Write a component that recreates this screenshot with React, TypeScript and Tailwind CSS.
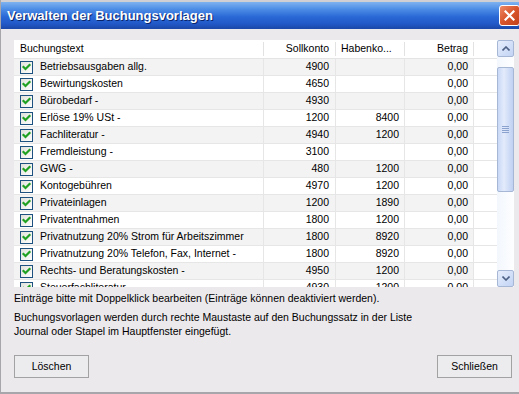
import React from "react";

const rows: [string, string, string, string][] = [
  ["Betriebsausgaben allg.", "4900", "", "0,00"],
  ["Bewirtungskosten", "4650", "", "0,00"],
  ["Bürobedarf -", "4930", "", "0,00"],
  ["Erlöse 19% USt -", "1200", "8400", "0,00"],
  ["Fachliteratur -", "4940", "1200", "0,00"],
  ["Fremdleistung -", "3100", "", "0,00"],
  ["GWG -", "480", "1200", "0,00"],
  ["Kontogebühren", "4970", "1200", "0,00"],
  ["Privateinlagen", "1200", "1890", "0,00"],
  ["Privatentnahmen", "1800", "1200", "0,00"],
  ["Privatnutzung 20% Strom für Arbeitszimmer", "1800", "8920", "0,00"],
  ["Privatnutzung 20% Telefon, Fax, Internet -", "1800", "8920", "0,00"],
  ["Rechts- und Beratungskosten -", "4950", "1200", "0,00"],
  ["Steuerfachliteratur -", "4930", "1200", "0,00"],
];

function Check() {
  return (
    <svg width="13" height="13" viewBox="0 0 13 13" className="shrink-0">
      <defs>
        <linearGradient id="cbg" x1="0" y1="0" x2="1" y2="1">
          <stop offset="0" stopColor="#e0e0da" />
          <stop offset="1" stopColor="#ffffff" />
        </linearGradient>
      </defs>
      <rect x="0.5" y="0.5" width="12" height="12" fill="url(#cbg)" stroke="#1c5180" />
      <path d="M3.5 6 L5.5 8 L9.5 4" stroke="#21a121" strokeWidth="2.2" fill="none" strokeLinecap="square" />
    </svg>
  );
}

export default function App() {
  const font = { fontFamily: '"Liberation Sans", Arial, sans-serif' };
  return (
    <div
      className="w-[519px] h-[394px] overflow-hidden flex flex-col bg-[#ece9ec] text-[10.5px] text-black border-l border-[#a7a6aa]"
      style={font}
    >
      {/* Title bar */}
      <div className="h-[2px] bg-[#cfcfd4] shrink-0" />
      <div className="h-[27px] shrink-0 flex items-center pl-[6px] bg-[linear-gradient(to_bottom,#7fb3f0_0%,#4f8fe6_25%,#2a68d6_55%,#2259c8_80%,#1b47a8_100%)]">
        <span className="flex-1 text-white font-bold text-[13px] pt-[1px] [text-shadow:1px_1px_0_#0a246a]">
          Verwalten der Buchungsvorlagen
        </span>
        <div className="w-[21px] h-[21px] mr-[-1px] rounded-[3px] border border-white bg-[linear-gradient(to_bottom_right,#ec8a66,#d9542a_50%,#c0401c)] flex items-center justify-center">
          <svg width="11" height="11" viewBox="0 0 11 11">
            <path d="M1.5 1.5 L9.5 9.5 M9.5 1.5 L1.5 9.5" stroke="#ffffff" strokeWidth="2.2" strokeLinecap="square" />
          </svg>
        </div>
      </div>

      {/* Body */}
      <div className="flex-1 flex flex-col pt-[11px] pl-[13px] pr-[5px] border-b-2 border-[#a7a6aa]">
        {/* List */}
        <div className="w-[500px] h-[247px] bg-white flex overflow-hidden">
          <div className="flex-1 flex flex-col overflow-hidden">
            {/* header */}
            <div className="h-[19px] shrink-0 grid grid-cols-[249px_72px_69px_69px_1fr] items-center border-b border-[#e4e4e4]">
              <div className="pl-[6px]">Buchungstext</div>
              <div className="border-l border-[#e2e2e2] h-[14px] flex items-center justify-end pr-[6px]">Sollkonto</div>
              <div className="border-l border-[#e2e2e2] h-[14px] flex items-center pl-[5px]">Habenko...</div>
              <div className="border-l border-[#e2e2e2] h-[14px] flex items-center justify-end pr-[5px]">Betrag</div>
              <div className="border-l border-[#e2e2e2] h-[14px]" />
            </div>
            {rows.map((r, i) => (
              <div
                key={i}
                className={`h-[17px] shrink-0 grid grid-cols-[249px_72px_69px_69px_1fr] border-b border-[#e6e6e6] ${
                  i % 2 === 0 ? "bg-[#f3f3f3]" : "bg-white"
                }`}
              >
                <div className="flex items-center pl-[6px] gap-[7px]">
                  <Check />
                  <span>{r[0]}</span>
                </div>
                <div className="border-l border-[#e6e6e6] flex items-center justify-end pr-[6px]">{r[1]}</div>
                <div className="border-l border-[#e6e6e6] flex items-center justify-end pr-[5px]">{r[2]}</div>
                <div className="border-l border-[#e6e6e6] flex items-center justify-end pr-[5px]">{r[3]}</div>
                <div className="border-l border-[#e6e6e6] bg-white" />
              </div>
            ))}
          </div>
          {/* scrollbar */}
          <div className="w-[17px] shrink-0 flex flex-col bg-[linear-gradient(to_right,#f3f7fd,#fdfeff)]">
            <div className="h-[17px] shrink-0 rounded-[2px] border border-[#a6b7d6] bg-[linear-gradient(to_bottom_right,#e6eefc,#c2d3f4)] flex items-center justify-center">
              <svg width="8" height="5" viewBox="0 0 8 5">
                <path d="M0.5 4.5 L4 1 L7.5 4.5" stroke="#4d6185" strokeWidth="1.6" fill="none" />
              </svg>
            </div>
            <div className="h-[10px] shrink-0" />
            <div className="h-[125px] shrink-0 rounded-[2px] border border-[#a6b7d6] bg-[linear-gradient(to_right,#c9d8f6,#e3ebfb_40%,#bfd0f2)] flex items-center justify-center">
              <svg width="7" height="8" viewBox="0 0 7 8">
                <path d="M0 0.5 H7 M0 2.5 H7 M0 4.5 H7 M0 6.5 H7" stroke="#8ca2ce" strokeWidth="1" />
              </svg>
            </div>
            <div className="flex-1" />
            <div className="h-[17px] shrink-0 rounded-[2px] border border-[#a6b7d6] bg-[linear-gradient(to_bottom_right,#e6eefc,#c2d3f4)] flex items-center justify-center">
              <svg width="8" height="5" viewBox="0 0 8 5">
                <path d="M0.5 0.5 L4 4 L7.5 0.5" stroke="#4d6185" strokeWidth="1.6" fill="none" />
              </svg>
            </div>
          </div>
        </div>

        {/* texts */}
        <div className="mt-[4px] leading-[14px]">
          Einträge bitte mit Doppelklick bearbeiten (Einträge können deaktiviert werden).
        </div>
        <div className="mt-[5px] leading-[14px]">
          Buchungsvorlagen werden durch rechte Maustaste auf den Buchungssatz in der Liste
          <br />
          Journal oder Stapel im Hauptfenster eingefügt.
        </div>

        {/* buttons */}
        <div className="mt-[17px] flex justify-between pr-[2px]">
          <button className="w-[75px] h-[23px] border border-[#a2a2a2] bg-[#ecebee] text-[10.5px]" style={font}>
            Löschen
          </button>
          <button className="w-[75px] h-[23px] border border-[#a2a2a2] bg-[#ecebee] text-[10.5px]" style={font}>
            Schließen
          </button>
        </div>
      </div>
    </div>
  );
}
